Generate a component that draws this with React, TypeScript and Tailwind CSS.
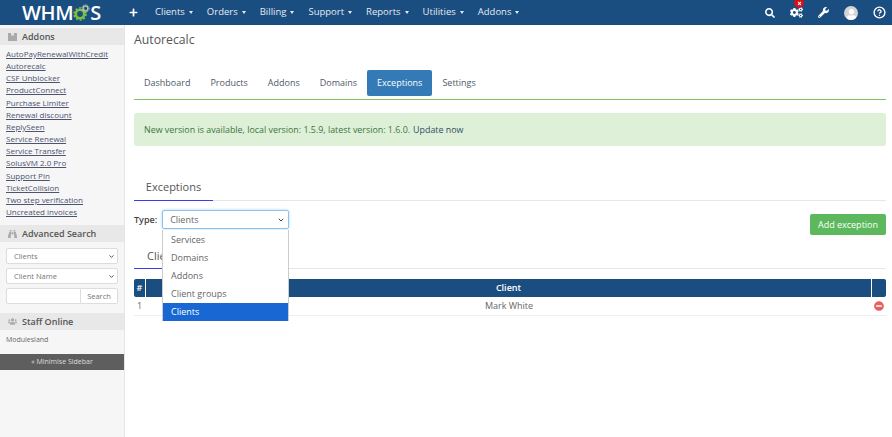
import { ChevronDown, CircleHelp } from "lucide-react";
import { FaBinoculars, FaCogs, FaMinusCircle, FaPlus, FaSearch, FaTimes, FaUser, FaUsers, FaWrench } from "react-icons/fa";

const navItems = ["Clients", "Orders", "Billing", "Support", "Reports", "Utilities", "Addons"];
const addons = [
  "AutoPayRenewalWithCredit",
  "Autorecalc",
  "CSF Unblocker",
  "ProductConnect",
  "Purchase Limiter",
  "Renewal discount",
  "ReplySeen",
  "Service Renewal",
  "Service Transfer",
  "SolusVM 2.0 Pro",
  "Support Pin",
  "TicketCollision",
  "Two step verification",
  "Uncreated invoices",
];
const tabs = ["Dashboard", "Products", "Addons", "Domains", "Exceptions", "Settings"];
const options = ["Services", "Domains", "Addons", "Client groups", "Clients"];

function Gear() {
  return (
    <svg viewBox="0 0 17 17" className="w-[17px] h-[17px] shrink-0 -mt-[1px]">
      <circle cx="7" cy="10" r="4.2" fill="none" stroke="#7ac143" strokeWidth="2.6" />
      <circle cx="7" cy="10" r="6" fill="none" stroke="#7ac143" strokeWidth="1.6" strokeDasharray="2 1.8" />
      <circle cx="12.5" cy="4.5" r="2.4" fill="none" stroke="#b4bfae" strokeWidth="1.5" />
      <circle cx="12.5" cy="4.5" r="3.7" fill="none" stroke="#b4bfae" strokeWidth="1" strokeDasharray="1.2 1.2" />
    </svg>
  );
}

function BoxIcon() {
  return (
    <svg viewBox="0 0 10 10" className="w-[9px] h-[9px]">
      <path d="M0 1h3.5v3h3V1H10v9H0z" fill="#aaa" />
    </svg>
  );
}

function SideHeading({ icon, label }: { icon: React.ReactNode; label: string }) {
  return (
    <div className="h-[17px] bg-[#e8e8e8] flex items-center pl-[8px] gap-[5px] text-[9px] font-semibold text-[#555]">
      <span className="w-[9px] flex justify-center text-[#aaa]">{icon}</span>
      {label}
    </div>
  );
}

function SideSelect({ label }: { label: string }) {
  return (
    <div className="h-[16px] w-[112px] bg-white border border-[#ddd] rounded-[2px] pl-[7px] pr-[2px] flex items-center justify-between">
      {label}
      <ChevronDown className="w-[7px] h-[7px] text-[#444]" strokeWidth={3} />
    </div>
  );
}

export default function App() {
  return (
    <div className="h-screen overflow-hidden bg-white font-['Open_Sans',sans-serif] flex flex-col">
      {/* Top bar */}
      <div className="h-[25px] shrink-0 bg-[#1a4d80] flex items-center text-white">
        <div className="w-[124px] shrink-0 flex items-center pl-[22px] text-[20px] leading-none font-semibold tracking-[-0.4px]">
          WHM
          <Gear />
          S
        </div>
        <FaPlus className="w-[9px] h-[9px] ml-[5px] mr-[17px]" />
        <div className="flex gap-[14px] text-[9.5px] text-[#e4ebf2]">
          {navItems.map((n) => (
            <span key={n} className="flex items-center gap-[4px]">
              {n}
              <span className="border-x-[2.5px] border-x-transparent border-t-[3px] border-t-[#e4ebf2]" />
            </span>
          ))}
        </div>
        <div className="ml-auto flex items-center gap-[15px] pr-[6px]">
          <FaSearch className="w-[10px] h-[10px]" />
          <span className="relative flex">
            <FaCogs className="w-[13px] h-[13px]" />
            <span className="absolute -top-[8px] left-[4px] w-[10px] h-[10px] rounded-full bg-[#d0121b] flex items-center justify-center">
              <FaTimes className="w-[5px] h-[5px]" />
            </span>
          </span>
          <FaWrench className="w-[11px] h-[11px]" />
          <span className="w-[14px] h-[14px] rounded-full bg-[#d4d4d4] flex items-end justify-center overflow-hidden">
            <FaUser className="w-[11px] h-[11px] text-white" />
          </span>
          <CircleHelp className="w-[13px] h-[13px]" strokeWidth={2.5} />
        </div>
      </div>

      <div className="flex flex-1 min-h-0">
        {/* Sidebar */}
        <aside className="w-[125px] shrink-0 bg-[#f6f6f6] border-r border-[#e6e6e6] pt-[3px]">
          <SideHeading icon={<BoxIcon />} label="Addons" />
          <ul className="pt-[3px] pl-[6px] text-[8px] leading-[12.15px] text-[#4c5470] underline">
            {addons.map((a) => (
              <li key={a}>{a}</li>
            ))}
          </ul>
          <div className="mt-[7px]">
            <SideHeading icon={<FaBinoculars className="w-[10px] h-[10px]" />} label="Advanced Search" />
          </div>
          <div className="px-[6px] pt-[6px] flex flex-col gap-[4px] text-[7.5px] text-[#777]">
            <SideSelect label="Clients" />
            <SideSelect label="Client Name" />
            <div className="flex h-[16px] w-[112px]">
              <div className="w-[75px] bg-white border border-[#ddd] rounded-l-[2px]" />
              <div className="flex-1 bg-white border border-l-0 border-[#ddd] rounded-r-[2px] flex items-center justify-center">Search</div>
            </div>
          </div>
          <div className="mt-[9px]">
            <SideHeading icon={<FaUsers className="w-[11px] h-[11px]" />} label="Staff Online" />
          </div>
          <div className="pl-[6px] pt-[4px] text-[7px] leading-[12px] text-[#666]">Modulesland</div>
          <div className="mt-[8px] h-[16px] bg-[#5e5e5e] flex items-center justify-center text-[7px] text-[#ddd]">« Minimise Sidebar</div>
        </aside>

        {/* Main */}
        <main className="flex-1 min-w-0 pl-[9px] pr-[6px] text-[9px] text-[#555]">
          <h1 className="pt-[6px] text-[12.25px] leading-[18px] text-[#555]">Autorecalc</h1>

          <div className="mt-[21px] h-[30px] border-b border-[#84c05c] flex items-start">
            {tabs.map((t) =>
              t === "Exceptions" ? (
                <div key={t} className="h-[26px] px-[10px] bg-[#337ab7] text-white rounded-[2px] flex items-center">{t}</div>
              ) : (
                <div key={t} className="h-[26px] px-[10px] text-[#50586a] flex items-center">{t}</div>
              )
            )}
          </div>

          <div className="mt-[13px] h-[33px] bg-[#dff0d8] rounded-[3px] flex items-center pl-[10px] text-[8.9px] text-[#3c763d]">
            New version is available, local version: 1.5.9, latest version: 1.6.0.
            <span className="ml-[3px] text-[#2f4f5f]">Update now</span>
          </div>

          <div className="mt-[32px] h-[23px] border-b border-[#e4e6ee] flex">
            <div className="w-[79px] h-[23px] border-b border-[#3b3bf0] text-center text-[11px] leading-[18px]">Exceptions</div>
          </div>

          <div className="relative mt-[9px] flex items-start justify-between h-[35px]">
            <div className="flex items-center gap-[5px] h-[19px]">
              <span className="font-semibold text-[9px] text-[#444]">Type:</span>
              <div className="w-[127px] h-[19px] bg-white border border-[#8fc1ee] rounded-[2px] pl-[7px] pr-[3px] shadow-[0_0_3px_#a9d3f5] text-[#666] flex items-center justify-between">
                Clients
                <ChevronDown className="w-[8px] h-[8px] text-[#444]" strokeWidth={3} />
              </div>
            </div>
            <div className="mt-[4px] h-[21px] w-[76px] bg-[#5cb85c] text-white rounded-[2px] flex items-center justify-center">Add exception</div>

            {/* open select list */}
            <ul className="absolute z-10 left-[28px] top-[20px] w-[127px] pt-px bg-white border-x border-[#ccc] text-[#666]">
              {options.map((o) => (
                <li key={o} className={o === "Clients" ? "h-[18px] pl-[8px] flex items-center bg-[#1967d2] text-white" : "h-[18px] pl-[8px] flex items-center"}>
                  {o}
                </li>
              ))}
            </ul>
          </div>

          <div className="h-[24px] border-b border-[#e4e6ee] flex">
            <div className="w-[79px] h-[24px] border-b border-[#3b3bf0] pl-[13px] text-[11px] leading-[22px]">Clients</div>
          </div>

          <div className="mt-[10px] border-b border-[#eee]">
            <div className="h-[18px] flex gap-px text-white text-[9px] font-semibold">
              <div className="w-[11px] bg-[#1a4d80] rounded-l-[2px] flex items-center justify-center">#</div>
              <div className="flex-1 bg-[#1a4d80] flex items-center justify-center">Client</div>
              <div className="w-[14px] bg-[#1a4d80] rounded-r-[2px]" />
            </div>
            <div className="h-[18px] flex items-center text-[9px] text-[#666]">
              <div className="w-[12px] pl-[3px]">1</div>
              <div className="flex-1 text-center">Mark White</div>
              <div className="w-[14px] flex justify-center">
                <FaMinusCircle className="w-[10px] h-[10px] text-[#e8615a]" />
              </div>
            </div>
          </div>
        </main>
      </div>
    </div>
  );
}
